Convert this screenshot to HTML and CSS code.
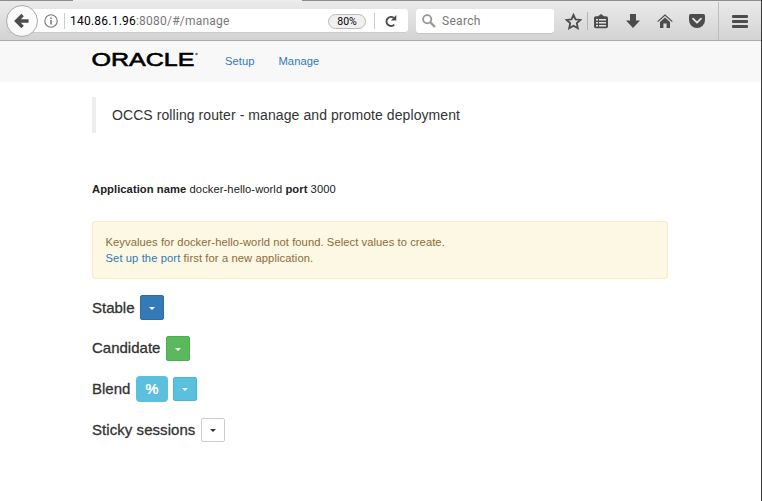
FILE: index.html
```html
<!DOCTYPE html>
<html lang="en">
<head>
<meta charset="utf-8">
<title>OCCS rolling router</title>
<link rel="stylesheet" href="styles.css">
</head>
<body>
<div class="window">
  <header class="toolbar">
    <div class="address">
      <button class="back" aria-label="Back"><svg width="16" height="16" viewBox="0 0 16 16"><path d="M8.6 2 2.6 8l6 6M3 8h11.6" fill="none" stroke="#4c4c4c" stroke-width="3.5"/></svg></button>
      <svg class="info" width="14" height="14" viewBox="0 0 14 14"><circle cx="7" cy="7" r="6.2" fill="none" stroke="#777" stroke-width="1.1"/><path d="M7 6v4.4M7 3.4v1.6" stroke="#777" stroke-width="1.5"/></svg>
      <i class="rule"></i>
      <span class="url"><b>140.86.1.96</b><span>:8080/#/manage</span></span>
      <span class="zoom">80%</span>
      <i class="rule"></i>
      <svg class="reload" width="12" height="12" viewBox="0 0 12 12"><path d="M9.2 9.6A4.5 4.5 0 1 1 8.7 2.8" fill="none" stroke="#4c4c4c" stroke-width="2"/><path d="M11.3 0v5.4H5.8z" fill="#4c4c4c"/></svg>
    </div>
    <div class="search">
      <svg width="14" height="14" viewBox="0 0 14 14"><circle cx="5.2" cy="5.2" r="4.1" fill="none" stroke="#999" stroke-width="1.9"/><path d="m8.3 8.3 4.7 4.7" stroke="#999" stroke-width="2.3"/></svg>
      <span>Search</span>
    </div>
    <div class="tools">
      <svg class="star" width="17" height="17" viewBox="0 0 17 17"><path d="m8.5 1.8 2 4.5 5 .6-3.7 3.3 1 5-4.3-2.5-4.3 2.5 1-5L1.5 6.9l5-.6z" fill="none" stroke="#4c4c4c" stroke-width="1.8"/></svg>
      <i class="rule"></i>
      <svg class="list" width="14" height="15" viewBox="0 0 14 15"><path d="M4 2.2 7 0l3 2.2h2.2Q14 2.2 14 4v8.5q0 1.8-2 1.8H2q-2 0-2-1.8V4q0-1.8 1.8-1.8z" fill="#4c4c4c"/><path d="M2 5h2v1.6H2zm3 0h7v1.6H5zM2 8h2v1.6H2zm3 0h7v1.6H5zM2 11h2v1.6H2zm3 0h7v1.6H5z" fill="#e2e2e2"/></svg>
      <svg class="down" width="14" height="14" viewBox="0 0 14 14"><path d="M4 0h6v6.5h4L7 14 0 6.5h4z" fill="#4c4c4c"/></svg>
      <svg class="home" width="16" height="15" viewBox="0 0 16 15"><path d="M.7 7.6 8 1l7.3 6.6" fill="none" stroke="#4c4c4c" stroke-width="1.2"/><path d="M3 8 8 3.6 13 8v6H9.6V9.5H6.4V14H3z" fill="#4c4c4c"/></svg>
      <svg class="pocket" width="16" height="14" viewBox="0 0 16 14"><path d="M1.8 0h12.4Q16 0 16 1.8V6A8 8 0 0 1 0 6V1.8Q0 0 1.8 0z" fill="#4c4c4c"/><path d="m4 4.7 4 4 4-4" fill="none" stroke="#e5e5e5" stroke-width="1.8" stroke-linecap="round" stroke-linejoin="round"/></svg>
    </div>
    <button class="menu" aria-label="Menu"><i></i><i></i><i></i></button>
  </header>
  <nav class="navbar">
    <svg class="logo" width="108" height="30" viewBox="0 -7 108 30" role="img" aria-label="Oracle"><text class="wordmark" y="13.4" x="0.5" textLength="103" lengthAdjust="spacingAndGlyphs">ORACLE</text><circle cx="105.5" cy="1" r="1.3" fill="#777"/></svg>
    <a class="setup">Setup</a><a>Manage</a>
  </nav>
  <main>
    <blockquote><span class="title">OCCS rolling router - manage and promote deployment</span></blockquote>
    <p class="app"><b>Application name</b> docker-hello-world <b>port</b> 3000</p>
    <div class="alert"><div class="msg1">Keyvalues for docker-hello-world not found. Select values to create.</div><div class="msg2"><a>Set up the port</a> first for a new application.</div></div>
    <div class="row"><span class="label stable">Stable</span><button class="btn primary"><i></i></button></div>
    <div class="row second"><span class="label candidate">Candidate</span><button class="btn success"><i></i></button></div>
    <div class="row"><span class="label blend">Blend</span><span class="percent">%</span><button class="btn infobtn"><i></i></button></div>
    <div class="row"><span class="label sticky">Sticky sessions</span><button class="btn default"><i></i></button></div>
  </main>
</div>
</body>
</html>
```
FILE: styles.css
```css
* { box-sizing: border-box; }
body { margin: 0; background: #fff; color: #333; font: 11.2px/16px "Liberation Sans", Arial, sans-serif; }
button { padding: 0; margin: 0; }
svg { display: block; flex: none; }
a { color: #337ab7; }
.window { height: 501px; border-right: 1px solid #3b3b3b; overflow: hidden; }
.toolbar { height: 41px; display: flex; align-items: center; padding: 2px 0 0 6px; border-bottom: 1px solid #aaa;
  background: linear-gradient(90deg, #8e8c8e 73px, #eee 73px 302px, #8e8c8e 302px) 0 0 / 100% 1px no-repeat, linear-gradient(#ebebeb, #d3d3d3); }
.address { width: 402px; height: 24px; display: flex; align-items: center; background: linear-gradient(#fff, #fff) 16px 0 no-repeat; border-radius: 3px; box-shadow: inset 0 -1px 0 #ccc; }
.back { width: 32px; height: 32px; flex: none; display: grid; place-items: center; border: 1px solid #aaa; border-radius: 50%; background: #fafafa; }
.info { margin-left: 6px; }
.rule { width: 1px; height: 16px; background: #ccc; flex: none; }
.info + .rule { margin: 0 5px 0 6px; }
.url { width: 258px; font: 12px/18px Roboto, sans-serif; letter-spacing: .23px; color: #777; white-space: nowrap; }
.url b { color: #000; font-weight: 400; }
.zoom { width: 38px; height: 15px; border: 1px solid #bbb; border-radius: 8px; background: #f0f0f0; color: #000; font: 10.5px/13px Roboto, sans-serif; text-align: center; }
.zoom + .rule { margin: 0 10px 0 8px; }
.search { width: 138px; height: 24px; margin-left: 8px; padding-left: 6px; display: flex; align-items: center; gap: 6px; background: #fff; border-radius: 3px; box-shadow: 0 1px 0 #c4c4c4; color: #777; font: 12px/18px Roboto, sans-serif; letter-spacing: .3px; }
.tools { width: 165px; height: 38px; display: flex; align-items: center; padding-left: 11px; border-right: 1px solid #bdbdbd; }
.tools .rule { height: 18px; margin: 0 6px 0 5px; background: #b5b5b5; }
.down { margin-left: 18px; }
.home { margin-left: 17px; }
.pocket { margin-left: 16px; }
.menu { width: 16px; margin-left: 13px; display: grid; gap: 2px; border: 0; background: none; }
.menu i { height: 3px; border-radius: 1px; background: #4c4c4c; }
.navbar { height: 41px; display: flex; align-items: center; padding: 0 0 1px 91px; background: #f8f8f8; letter-spacing: .05px; }
.logo { margin-right: 26px; }
.wordmark { font: 400 19.2px "Liberation Sans", Arial, sans-serif; letter-spacing: 0; stroke: #000; stroke-width: .6px; }
.setup { margin-right: 24px; }
main { padding: 15px 0 0 92px; }
blockquote { margin: 0; height: 36px; padding-left: 16px; border-left: 4px solid #eee; font-size: 14px; line-height: 36px; letter-spacing: .08px; }
.app { margin: 48px 0 0; white-space: nowrap; color: #222; letter-spacing: .07px; }
.alert { width: 576px; height: 58px; margin: 24px 0 16px; padding: 12px 12px 12px 12.5px; border: 1px solid #faebcc; border-radius: 3px; background: #fcf8e3; color: #8a6d3b; letter-spacing: .07px; }
.msg2 { letter-spacing: .1px; }
.row { height: 25px; margin-bottom: 16px; display: flex; align-items: center; gap: 5px; font-size: 15px; }
.second { margin-bottom: 15px; }
.label { -webkit-text-stroke: .3px #333; white-space: nowrap; }
.stable { width: 43px; }
.candidate { width: 69px; margin-top: -1px; }
.blend { width: 39px; }
.sticky { width: 104px; letter-spacing: .06px; }
.btn { width: 24px; height: 25px; display: grid; place-items: center; border: 1px solid; border-radius: 2px; color: #fff; }
.btn i { border: solid transparent; border-width: 3px 3px 0; border-top-color: currentColor; margin-top: 2px; }
.primary { background: #337ab7; border-color: #2e6da4; }
.success { background: #5cb85c; border-color: #4cae4c; }
.infobtn { height: 24px; background: #5bc0de; border-color: #46b8da; }
.default { height: 24px; background: #fff; border-color: #ccc; color: #333; }
.percent { width: 32px; height: 26px; border-radius: 4px; background: #5bc0de; color: #fff; font-weight: 700; line-height: 26px; text-align: center; }
```
